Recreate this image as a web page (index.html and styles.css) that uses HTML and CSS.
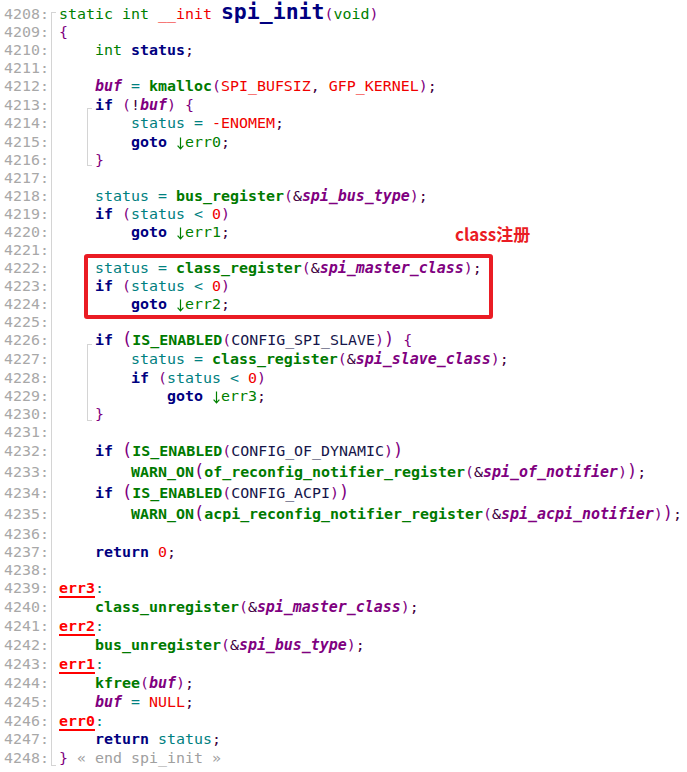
FILE: index.html
```html
<!DOCTYPE html>
<html>
<head>
<meta charset="utf-8">
<title>spi_init</title>
<link rel="stylesheet" href="styles.css">
</head>
<body>
<div class="editor">
  <div class="fn">
    <div class="ln"><span class="no">4208:</span><span class="src"><span class="kw">static int</span> <span class="rd">__init</span> <span class="fname">spi_init</span><span class="p">(</span><span class="kw">void</span><span class="p">)</span></span></div>
    <div class="ln"><span class="no">4209:</span><span class="src"><span class="p">{</span></span></div>
    <div class="ln"><span class="no">4210:</span><span class="src">    <span class="kw">int</span> <span class="nv">status</span><span class="dk">;</span></span></div>
    <div class="ln"><span class="no">4211:</span><span class="src"></span></div>
    <div class="ln h19"><span class="no">4212:</span><span class="src">    <span class="gv">buf</span> <span class="tl">=</span> <span class="fc">kmalloc</span><span class="p">(</span><span class="rd">SPI_BUFSIZ</span><span class="dk">,</span> <span class="rd">GFP_KERNEL</span><span class="p">)</span><span class="dk">;</span></span></div>
    <div class="blk blk-a">
      <div class="ln"><span class="no">4213:</span><span class="src">    <span class="nv">if</span> <span class="p">(</span><span class="dk">!</span><span class="gv">buf</span><span class="p">)</span> <span class="p">{</span></span></div>
      <div class="ln h19"><span class="no">4214:</span><span class="src">        <span class="tl">status</span> <span class="tl">=</span> <span class="rd">-ENOMEM</span><span class="dk">;</span></span></div>
      <div class="ln"><span class="no">4215:</span><span class="src">        <span class="nv">goto</span> <span class="ar"><svg class="arrow" viewBox="0 0 9 14" aria-hidden="true"><path d="M4.5 1.5V12.8M1.6 9.6L4.5 12.8L7.4 9.6"/></svg>err0</span><span class="dk">;</span></span></div>
      <div class="ln"><span class="no">4216:</span><span class="src">    <span class="p">}</span></span></div>
    </div>
    <div class="ln"><span class="no">4217:</span><span class="src"></span></div>
    <div class="ln"><span class="no">4218:</span><span class="src">    <span class="tl">status</span> <span class="tl">=</span> <span class="fc">bus_register</span><span class="p">(</span><span class="dk">&amp;</span><span class="gv">spi_bus_type</span><span class="p">)</span><span class="dk">;</span></span></div>
    <div class="ln"><span class="no">4219:</span><span class="src">    <span class="nv">if</span> <span class="p">(</span><span class="tl">status</span> <span class="tl">&lt;</span> <span class="rd">0</span><span class="p">)</span></span></div>
    <div class="ln"><span class="no">4220:</span><span class="src">        <span class="nv">goto</span> <span class="ar"><svg class="arrow" viewBox="0 0 9 14" aria-hidden="true"><path d="M4.5 1.5V12.8M1.6 9.6L4.5 12.8L7.4 9.6"/></svg>err1</span><span class="dk">;</span></span></div>
    <div class="ln"><span class="no">4221:</span><span class="src"></span></div>
    <div class="mark">
      <span class="note">class注册</span>
      <div class="ln"><span class="no">4222:</span><span class="src">    <span class="tl">status</span> <span class="tl">=</span> <span class="fc">class_register</span><span class="p">(</span><span class="dk">&amp;</span><span class="gv">spi_master_class</span><span class="p">)</span><span class="dk">;</span></span></div>
      <div class="ln"><span class="no">4223:</span><span class="src">    <span class="nv">if</span> <span class="p">(</span><span class="tl">status</span> <span class="tl">&lt;</span> <span class="rd">0</span><span class="p">)</span></span></div>
      <div class="ln"><span class="no">4224:</span><span class="src">        <span class="nv">goto</span> <span class="ar"><svg class="arrow" viewBox="0 0 9 14" aria-hidden="true"><path d="M4.5 1.5V12.8M1.6 9.6L4.5 12.8L7.4 9.6"/></svg>err2</span><span class="dk">;</span></span></div>
    </div>
    <div class="ln"><span class="no">4225:</span><span class="src"></span></div>
    <div class="blk blk-b">
      <div class="ln h19"><span class="no">4226:</span><span class="src">    <span class="nv">if</span> <span class="pb">(</span><span class="fc">IS_ENABLED</span><span class="p">(</span><span class="mc">CONFIG_SPI_SLAVE</span><span class="p">)</span><span class="pb">)</span> <span class="p">{</span></span></div>
      <div class="ln h19"><span class="no">4227:</span><span class="src">        <span class="tl">status</span> <span class="tl">=</span> <span class="fc">class_register</span><span class="p">(</span><span class="dk">&amp;</span><span class="gv">spi_slave_class</span><span class="p">)</span><span class="dk">;</span></span></div>
      <div class="ln"><span class="no">4228:</span><span class="src">        <span class="nv">if</span> <span class="p">(</span><span class="tl">status</span> <span class="tl">&lt;</span> <span class="rd">0</span><span class="p">)</span></span></div>
      <div class="ln"><span class="no">4229:</span><span class="src">            <span class="nv">goto</span> <span class="ar"><svg class="arrow" viewBox="0 0 9 14" aria-hidden="true"><path d="M4.5 1.5V12.8M1.6 9.6L4.5 12.8L7.4 9.6"/></svg>err3</span><span class="dk">;</span></span></div>
      <div class="ln"><span class="no">4230:</span><span class="src">    <span class="p">}</span></span></div>
    </div>
    <div class="ln"><span class="no">4231:</span><span class="src"></span></div>
    <div class="ln h21"><span class="no">4232:</span><span class="src">    <span class="nv">if</span> <span class="pb">(</span><span class="fc">IS_ENABLED</span><span class="p">(</span><span class="mc">CONFIG_OF_DYNAMIC</span><span class="p">)</span><span class="pb">)</span></span></div>
    <div class="ln h21"><span class="no">4233:</span><span class="src">        <span class="fc">WARN_ON</span><span class="pb">(</span><span class="fc">of_reconfig_notifier_register</span><span class="p">(</span><span class="dk">&amp;</span><span class="gv">spi_of_notifier</span><span class="p">)</span><span class="pb">)</span><span class="dk">;</span></span></div>
    <div class="ln h21"><span class="no">4234:</span><span class="src">    <span class="nv">if</span> <span class="pb">(</span><span class="fc">IS_ENABLED</span><span class="p">(</span><span class="mc">CONFIG_ACPI</span><span class="p">)</span><span class="pb">)</span></span></div>
    <div class="ln h21"><span class="no">4235:</span><span class="src">        <span class="fc">WARN_ON</span><span class="pb">(</span><span class="fc">acpi_reconfig_notifier_register</span><span class="p">(</span><span class="dk">&amp;</span><span class="gv">spi_acpi_notifier</span><span class="p">)</span><span class="pb">)</span><span class="dk">;</span></span></div>
    <div class="ln"><span class="no">4236:</span><span class="src"></span></div>
    <div class="ln"><span class="no">4237:</span><span class="src">    <span class="nv">return</span> <span class="rd">0</span><span class="dk">;</span></span></div>
    <div class="ln"><span class="no">4238:</span><span class="src"></span></div>
    <div class="ln h19"><span class="no">4239:</span><span class="src"><span class="lb">err3</span><span class="tl">:</span></span></div>
    <div class="ln h19"><span class="no">4240:</span><span class="src">    <span class="fc">class_unregister</span><span class="p">(</span><span class="dk">&amp;</span><span class="gv">spi_master_class</span><span class="p">)</span><span class="dk">;</span></span></div>
    <div class="ln h19"><span class="no">4241:</span><span class="src"><span class="lb">err2</span><span class="tl">:</span></span></div>
    <div class="ln h19"><span class="no">4242:</span><span class="src">    <span class="fc">bus_unregister</span><span class="p">(</span><span class="dk">&amp;</span><span class="gv">spi_bus_type</span><span class="p">)</span><span class="dk">;</span></span></div>
    <div class="ln h19"><span class="no">4243:</span><span class="src"><span class="lb">err1</span><span class="tl">:</span></span></div>
    <div class="ln h19"><span class="no">4244:</span><span class="src">    <span class="fc">kfree</span><span class="p">(</span><span class="gv">buf</span><span class="p">)</span><span class="dk">;</span></span></div>
    <div class="ln h19"><span class="no">4245:</span><span class="src">    <span class="gv">buf</span> <span class="tl">=</span> <span class="rd">NULL</span><span class="dk">;</span></span></div>
    <div class="ln"><span class="no">4246:</span><span class="src"><span class="lb">err0</span><span class="tl">:</span></span></div>
    <div class="ln h19"><span class="no">4247:</span><span class="src">    <span class="nv">return</span> <span class="tl">status</span><span class="dk">;</span></span></div>
    <div class="ln h19"><span class="no">4248:</span><span class="src"><span class="p">}</span> <span class="cm">« end spi_init »</span></span></div>
  </div>
  <div class="ln"><span class="no">4249:</span><span class="src"></span></div>
</div>
</body>
</html>
```

FILE: styles.css
```css
html, body {
  margin: 0;
  padding: 0;
  background: #ffffff;
  overflow: hidden;
}

.editor {
  padding-top: 5px;
  font-family: "DejaVu Sans Mono", "Liberation Mono", monospace;
  font-size: 14.95px;
  color: #202040;
}

.fn, .blk, .mark {
  position: relative;
}

.fn::before {
  content: "";
  position: absolute;
  left: 51px;
  top: 7px;
  bottom: 2px;
  width: 4px;
  border: 1px solid #d4d4d4;
  border-right: none;
}

.blk::before {
  content: "";
  position: absolute;
  left: 87px;
  top: 12px;
  bottom: 3px;
  width: 4px;
  border: 1px solid #d4d4d4;
  border-right: none;
}

.blk-b::before {
  top: 13px;
  bottom: 2px;
}

.mark::after {
  content: "";
  position: absolute;
  left: 84px;
  top: -5px;
  bottom: -6px;
  width: 409px;
  box-sizing: border-box;
  border: 4px solid #ea1c24;
  border-radius: 3px;
}

.note {
  position: absolute;
  left: 455px;
  top: -36px;
  font-family: "Noto Sans CJK SC", "Noto Sans", sans-serif;
  font-weight: 700;
  font-size: 17px;
  line-height: 22px;
  color: #ea1c24;
  white-space: nowrap;
}

.ln {
  display: flex;
  height: 18px;
  line-height: 18px;
  white-space: pre;
}

.h19 {
  height: 19px;
  line-height: 19px;
}

.h21 {
  height: 21px;
  line-height: 21px;
}

.no {
  flex: 0 0 59px;
  box-sizing: border-box;
  padding-left: 4px;
  color: #a8a8a8;
}

.src {
  flex: 1;
}

.kw { color: #008000; }
.rd { color: #f00000; }
.p { color: #800080; }
.pb { color: #800080; font-size: 17px; line-height: 0; }
.nv { color: #000080; font-weight: 700; }
.tl { color: #008080; }
.gv { color: #800080; font-weight: 700; font-style: italic; }
.fc { color: #007a00; font-weight: 700; }
.dk { color: #400040; }
.mc { color: #16164a; }
.ar { color: #008000; }
.cm { color: #a0a0a0; }

.arrow {
  display: inline-block;
  width: 9px;
  height: 14px;
  vertical-align: -3px;
  fill: none;
  stroke: #008000;
  stroke-width: 1.2;
}

.fname {
  color: #000080;
  font-weight: 700;
  font-size: 21.5px;
  line-height: 0;
}

.lb {
  color: #ff0000;
  font-weight: 700;
  text-decoration: underline;
  text-decoration-thickness: 2px;
  text-underline-offset: 3px;
}
```
